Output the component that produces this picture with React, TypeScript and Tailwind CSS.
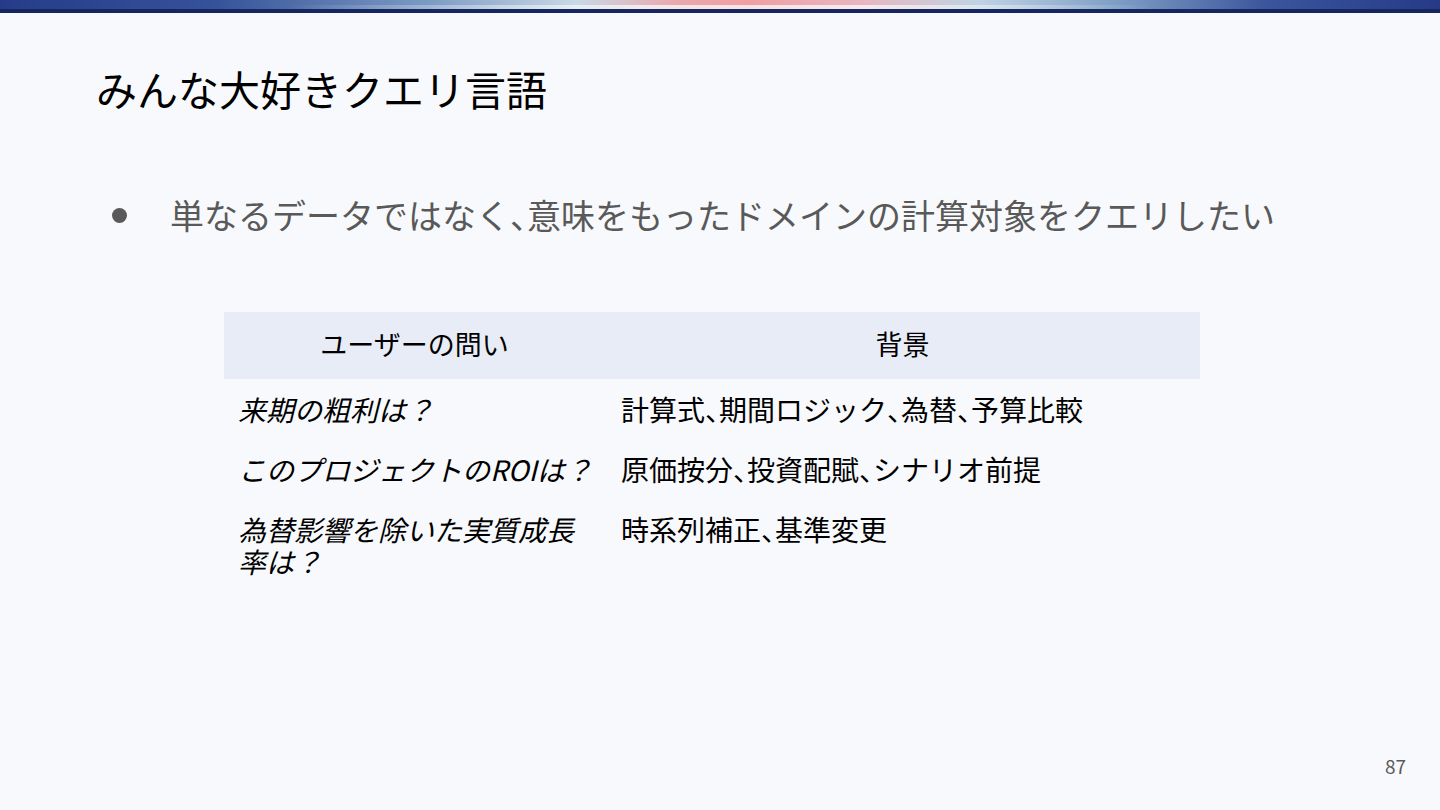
const rows: { q: string; bg: string }[] = [
  { q: '来期の粗利は？', bg: '計算式、期間ロジック、為替、予算比較' },
  { q: 'このプロジェクトのROIは？', bg: '原価按分、投資配賦、シナリオ前提' },
  { q: '為替影響を除いた実質成長率は？', bg: '時系列補正、基準変更' },
];

const font = { fontFamily: '"Noto Sans CJK JP", "Noto Sans", sans-serif' };

// narrow the ideographic comma like the slide font does
function Text({ s }: { s: string }) {
  const parts = s.split('、');
  return (
    <>
      {parts.map((p, i) => (
        <span key={i}>
          {p}
          {i < parts.length - 1 && <span className="[font-feature-settings:'halt']">、</span>}
        </span>
      ))}
    </>
  );
}

export default function App() {
  return (
    <div className="flex h-[810px] w-[1440px] flex-col bg-[#f8f9fc] text-black" style={font}>
      {/* top band */}
      <div className="relative h-[9px] bg-[linear-gradient(90deg,#263c8a_0%,#36529a_15%,#7d9cc4_30%,#c9d9e6_40%,#e9a9ac_47%,#ef9fa3_52%,#e6b7c0_60%,#bfd4e4_68%,#7b9bc4_78%,#3b559c_88%,#263a88_100%)]">
        <div className="absolute inset-x-0 bottom-0 h-[4px] bg-[linear-gradient(90deg,rgba(255,255,255,0)_20%,rgba(255,255,255,0.7)_45%,rgba(255,255,255,0.7)_60%,rgba(255,255,255,0)_80%)]" />
      </div>
      <div className="h-[4px] bg-[#16265e]" />

      <h1 className="ml-[96px] mt-[51px] text-[41px] leading-[48px] font-normal">
        みんな大好きクエリ言語
      </h1>

      <div className="ml-[112px] mt-[79px] flex items-center text-[#595959]">
        <span className="h-[15px] w-[15px] rounded-full bg-[#595959]" />
        <span className="ml-[43px] text-[34px] leading-[48px]">
          <Text s="単なるデータではなく、意味をもったドメインの計算対象をクエリしたい" />
        </span>
      </div>

      <table className="ml-[224px] mt-[73px] w-[976px] table-fixed border-collapse text-[28px]">
        <colgroup>
          <col className="w-[381px]" />
          <col />
        </colgroup>
        <thead>
          <tr className="h-[67px] bg-[#e8ecf7] text-[27px]">
            <th className="pb-[2px] font-normal">ユーザーの問い</th>
            <th className="pb-[2px] font-normal">背景</th>
          </tr>
        </thead>
        <tbody>
          {rows.map((r) => (
            <tr key={r.q}>
              <td className="py-[14px] pl-[14px] pr-[8px] align-top italic leading-[32px]">{r.q}</td>
              <td className="py-[14px] pl-[16px] pr-[14px] align-top leading-[32px]">
                <Text s={r.bg} />
              </td>
            </tr>
          ))}
        </tbody>
      </table>

      <div className="mt-auto mb-[32px] mr-[34px] self-end text-[19px] leading-[24px] text-[#595959]">87</div>
    </div>
  );
}
